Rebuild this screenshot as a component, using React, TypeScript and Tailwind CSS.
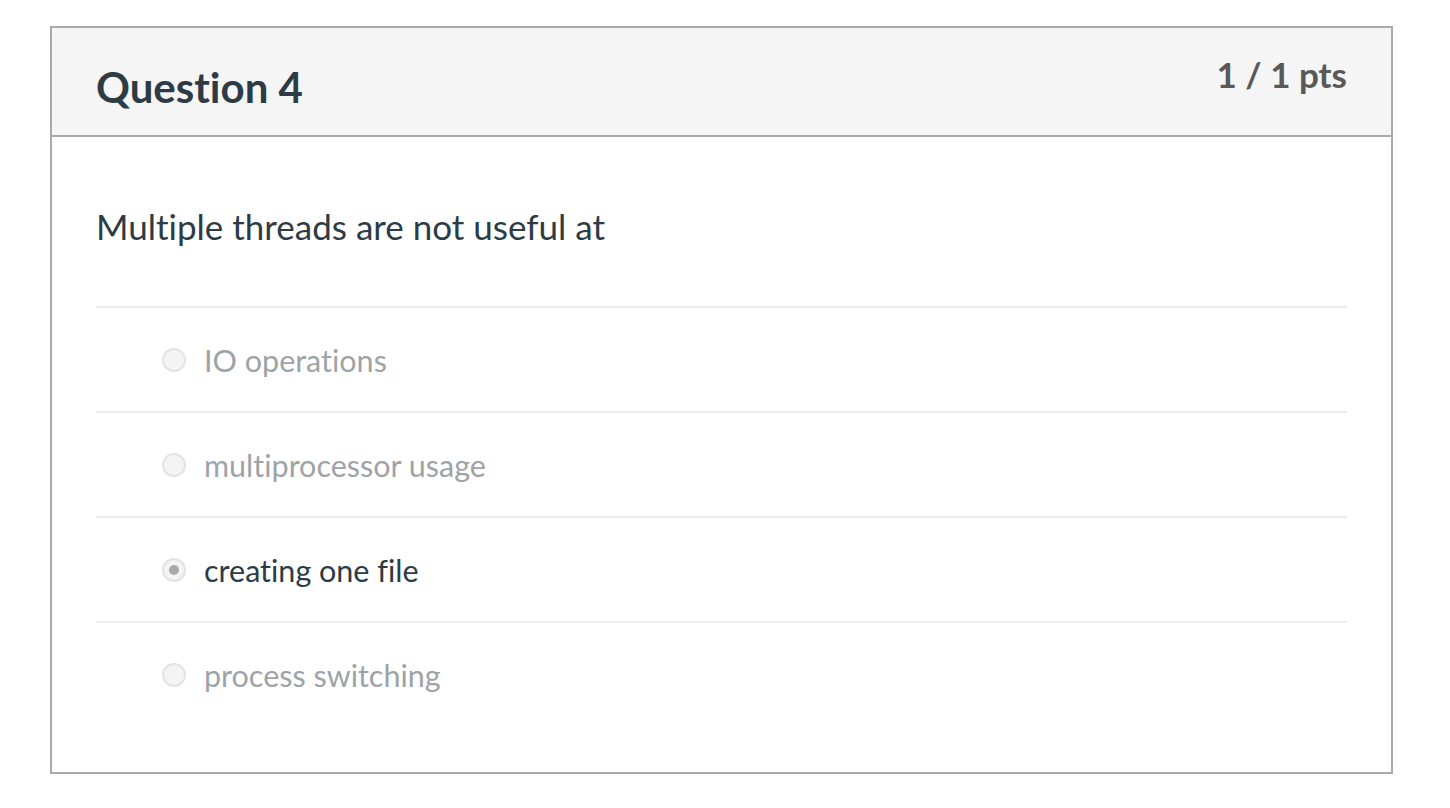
const answers = [
  { label: 'IO operations', selected: false },
  { label: 'multiprocessor usage', selected: false },
  { label: 'creating one file', selected: true },
  { label: 'process switching', selected: false },
]

const Radio = ({ selected }: { selected: boolean }) => (
  <span className="flex h-[24px] w-[24px] shrink-0 items-center justify-center rounded-full border-2 border-[#e3e3e3] bg-[#f4f4f4]">
    {selected && <span className="h-[10px] w-[10px] rounded-full bg-[#a9a9a9]" />}
  </span>
)

const App = () => {
  return (
    <div className="min-h-[808px] bg-white pl-[50px] pt-[26px] font-['Lato','Liberation_Sans',sans-serif] [font-variant-ligatures:none]">
      <div className="w-[1343px] border-2 border-[#aaaaaa]">
        <div className="flex h-[109px] items-start justify-between border-b-2 border-[#aaaaaa] bg-[#f5f5f5] px-[44px]">
          <h2 className="mt-[38px] text-[42px] leading-none font-bold text-[#2d3b45]">
            Question 4
          </h2>
          <div className="mt-[29px] text-[35px] leading-none font-bold text-[#595959]">
            1 / 1 pts
          </div>
        </div>

        <div className="px-[44px] pb-[46px]">
          <p className="mt-[72px] mb-[62px] text-[35px] leading-none text-[#2d3b45]">
            Multiple threads are not useful at
          </p>
          {answers.map((a) => (
            <div
              key={a.label}
              className="flex h-[105px] items-center gap-[18px] border-t-2 border-[#ececec] pl-[66px]"
            >
              <Radio selected={a.selected} />
              <span
                className={
                  a.selected
                    ? 'mt-[3px] text-[30.5px] text-[#2d3b45]'
                    : 'mt-[2px] text-[30.5px] text-[#9ea3a7]'
                }
              >
                {a.label}
              </span>
            </div>
          ))}
        </div>
      </div>
    </div>
  )
}

export default App
